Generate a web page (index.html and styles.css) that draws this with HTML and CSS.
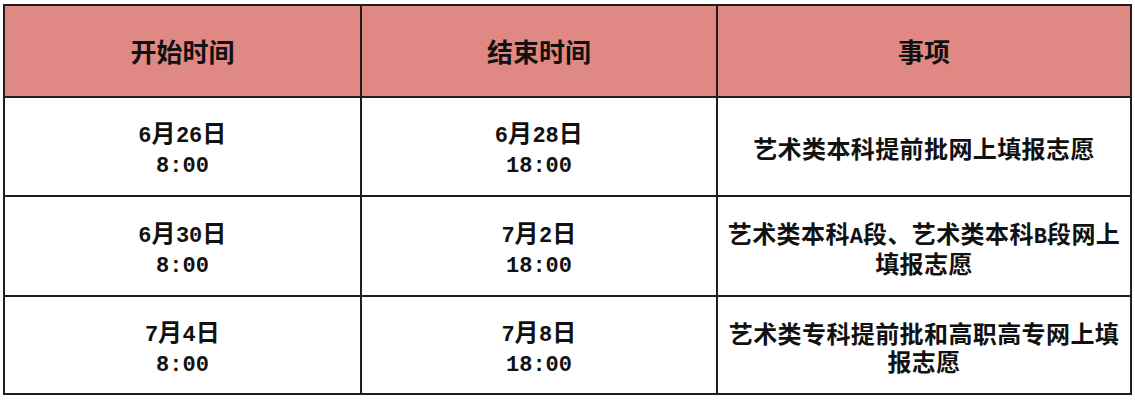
FILE: index.html
```html
<!DOCTYPE html>
<html lang="zh">
<head>
<meta charset="utf-8">
<link rel="stylesheet" href="styles.css">
</head>
<body>
<table class="sched">
  <colgroup>
    <col class="c1"><col class="c2"><col class="c3">
  </colgroup>
  <thead>
    <tr class="head"><th>开始时间</th><th>结束时间</th><th>事项</th></tr>
  </thead>
  <tbody>
    <tr class="r1">
      <td><span class="num">6</span>月<span class="num">26</span>日<br><span class="num">8:00</span></td>
      <td><span class="num">6</span>月<span class="num">28</span>日<br><span class="num">18:00</span></td>
      <td>艺术类本科提前批网上填报志愿</td>
    </tr>
    <tr class="r2">
      <td><span class="num">6</span>月<span class="num">30</span>日<br><span class="num">8:00</span></td>
      <td><span class="num">7</span>月<span class="num">2</span>日<br><span class="num">18:00</span></td>
      <td>艺术类本科<span class="num">A</span>段、艺术类本科<span class="num">B</span>段网上填报志愿</td>
    </tr>
    <tr class="r3">
      <td><span class="num">7</span>月<span class="num">4</span>日<br><span class="num">8:00</span></td>
      <td><span class="num">7</span>月<span class="num">8</span>日<br><span class="num">18:00</span></td>
      <td>艺术类专科提前批和高职高专网上填报志愿</td>
    </tr>
  </tbody>
</table>
</body>
</html>
```

FILE: styles.css
```css
html, body {
  margin: 0;
  padding: 0;
  background: #ffffff;
}
body {
  padding: 4px 0 0 3px;
  font-family: "Noto Sans CJK SC", "Noto Sans", sans-serif;
  color: #111111;
}
.sched {
  border-collapse: collapse;
  table-layout: fixed;
  width: 1127px;
}
.c1 { width: 357px; }
.c2 { width: 356px; }
.c3 { width: 414px; }
.sched th,
.sched td {
  border: 2px solid #1e1e1e;
  text-align: center;
  vertical-align: middle;
  font-weight: 700;
  padding: 0 4px;
}
.sched th {
  background: #df8884;
  font-size: 26px;
  line-height: 32px;
  height: 90px;
}
.sched td {
  font-size: 24px;
  line-height: 28px;
  letter-spacing: 0.4px;
  padding-top: 3px;
}
.r1 td { height: 94px; }
.r2 td { height: 95px; }
.r3 td { height: 93px; }
.num {
  font-family: "Liberation Mono", monospace;
  font-size: 22px;
  line-height: 1;
  letter-spacing: 0;
}
```
